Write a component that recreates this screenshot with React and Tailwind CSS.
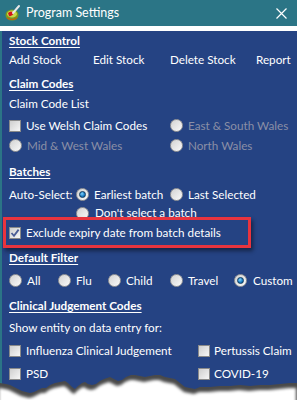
import React from "react";

const font = { fontFamily: 'Lato, "Noto Sans", sans-serif' };

function Radio({ checked }) {
  return (
    <span className="relative inline-flex h-[13px] w-[13px] shrink-0 items-center justify-center rounded-full border border-[#9a9a9a] bg-gradient-to-br from-[#d2d2d2] to-[#fafafa]">
      {checked && (
        <span className="h-[7px] w-[7px] rounded-full border border-[#0e3a5e] bg-[radial-gradient(circle_at_40%_35%,#7fd3ff,#1878c0_60%,#0b4f86)]" />
      )}
    </span>
  );
}

function Check({ checked }) {
  return (
    <span className="relative inline-flex h-[12px] w-[12px] shrink-0 items-center justify-center border border-[#8a8a8a] bg-gradient-to-br from-[#cfcfcf] to-[#f7f7f7]">
      {checked && (
        <svg width="10" height="10" viewBox="0 0 10 10">
          <path d="M1.5 5 L4 7.8 L8.6 1.6" fill="none" stroke="#4a5c96" strokeWidth="1.8" />
        </svg>
      )}
    </span>
  );
}

function Heading({ children, className = "" }) {
  return (
    <div className={"flex h-[20px] items-center font-bold underline underline-offset-2 " + className}>
      {children}
    </div>
  );
}

const EDGE =
  "M0 378 L6 379 L10 380 L14 382 L18 384 L22 386 L26 387 L30 388 L34 387 L38 385 L42 383 L46 383 L50 380 L55 378 L60 377 L65 376 L68 378 L72 382 L75 384 L78 381 L82 378 L85 377 L88 379 L92 380 L96 379 L100 376 L104 374 L110 372 L114 374 L118 376 L122 375 L126 372 L131 370 L135 370 L140 371 L145 372 L150 371 L155 370 L160 370 L165 372 L170 373 L175 374 L180 378 L185 382 L190 383 L195 384 L200 382 L210 382 L220 381 L230 381 L240 380 L250 381 L260 380 L270 380 L280 379 L290 378 L297 378 L297 400 L0 400 Z";

export default function App() {
  return (
    <div className="w-[297px] h-[400px] overflow-hidden bg-white text-[11.7px] text-white whitespace-nowrap" style={font}>
      {/* title bar */}
      <div className="flex h-[26px] items-center bg-[#2b7586] pl-[4px] pr-[10px]">
        <svg width="18" height="18" viewBox="0 0 18 18" className="shrink-0">
          <ellipse cx="8" cy="11" rx="6.5" ry="5.5" fill="#7a9a1e" />
          <ellipse cx="8" cy="10" rx="5" ry="3.5" fill="#c8d84a" />
          <path d="M4 9 Q7 6 10 9 Q8 13 5 12 Z" fill="#d4141c" />
          <path d="M9 9 L15 2" stroke="#e8e8e8" strokeWidth="2" strokeLinecap="round" />
          <path d="M3 14 Q8 17 13 14" stroke="#c06010" strokeWidth="1.2" fill="none" />
        </svg>
        <span className="ml-[4px] text-[12.5px]">Program Settings</span>
        <svg width="11" height="11" viewBox="0 0 11 11" className="ml-auto">
          <path d="M0.5 0.5 L10.5 10.5 M10.5 0.5 L0.5 10.5" stroke="#fff" strokeWidth="1.2" />
        </svg>
      </div>
      {/* body */}
      <div className="relative h-[374px] border-l-2 border-[#2b7586] bg-[#254383] pl-[7px]">
        <Heading className="mt-[5px]">Stock Control</Heading>
        <div className="flex h-[18px] items-center">
          <span className="w-[84px]">Add Stock</span>
          <span className="w-[77px]">Edit Stock</span>
          <span className="w-[86px]">Delete Stock</span>
          <span>Report</span>
        </div>
        <Heading className="mt-[5px]">Claim Codes</Heading>
        <div className="mt-[1px] flex h-[18px] items-center">Claim Code List</div>
        <div className="mt-[3px] flex h-[20px] items-center">
          <div className="flex w-[161px] items-center gap-[5px]">
            <Check />
            <span>Use Welsh Claim Codes</span>
          </div>
          <div className="flex items-center gap-[5px] text-[#8a8fa6]">
            <Radio />
            <span>East &amp; South Wales</span>
          </div>
        </div>
        <div className="flex h-[20px] items-center">
          <div className="flex w-[161px] items-center gap-[5px] text-[#8a8fa6]">
            <Radio />
            <span>Mid &amp; West Wales</span>
          </div>
          <div className="flex items-center gap-[5px] text-[#8a8fa6]">
            <Radio />
            <span>North Wales</span>
          </div>
        </div>
        <Heading className="mt-[6px]">Batches</Heading>
        <div className="mt-[3px] flex h-[20px] items-center">
          <span className="w-[67px]">Auto-Select:</span>
          <div className="flex w-[94px] items-center gap-[5px]">
            <Radio checked />
            <span>Earliest batch</span>
          </div>
          <div className="flex items-center gap-[5px]">
            <Radio />
            <span>Last Selected</span>
          </div>
        </div>
        <div className="flex h-[16px] items-center pl-[67px]">
          <div className="flex items-center gap-[6px]">
            <Radio />
            <span>Don't select a batch</span>
          </div>
        </div>
        <div className="relative mt-[2px] flex h-[20px] items-center gap-[5px]">
          <span className="pointer-events-none absolute left-[-6px] top-[-6px] h-[31px] w-[248px] border-[3px] border-[#e8343e] shadow-[2px_3px_4px_rgba(0,0,0,0.45)]" />
          <Check checked />
          <span>Exclude expiry date from batch details</span>
        </div>
        <Heading className="mt-[5px]">Default Filter</Heading>
        <div className="mt-[3px] flex h-[20px] items-center">
          <div className="flex w-[49px] items-center gap-[5px]"><Radio /><span>All</span></div>
          <div className="flex w-[50px] items-center gap-[5px]"><Radio /><span>Flu</span></div>
          <div className="flex w-[62px] items-center gap-[5px]"><Radio /><span>Child</span></div>
          <div className="flex w-[64px] items-center gap-[5px]"><Radio /><span>Travel</span></div>
          <div className="flex items-center gap-[6px]"><Radio checked /><span>Custom</span></div>
        </div>
        <Heading className="mt-[5px]">Clinical Judgement Codes</Heading>
        <div className="mt-[3px] flex h-[18px] items-center">Show entity on data entry for:</div>
        <div className="mt-[4px] flex h-[20px] items-center">
          <div className="flex w-[189px] items-center gap-[5px]"><Check /><span>Influenza Clinical Judgement</span></div>
          <div className="flex items-center gap-[4px]"><Check /><span>Pertussis Claim</span></div>
        </div>
        <div className="mt-[3px] flex h-[20px] items-center">
          <div className="flex w-[189px] items-center gap-[5px]"><Check /><span>PSD</span></div>
          <div className="flex items-center gap-[4px]"><Check /><span>COVID-19</span></div>
        </div>
        {/* torn paper edge */}
        <svg className="absolute bottom-0 left-[-2px]" width="297" height="34" viewBox="0 366 297 34">
          <defs>
            <filter id="sh2" x="-5%" y="-50%" width="110%" height="200%">
              <feGaussianBlur stdDeviation="1.5" />
            </filter>
          </defs>
          <path d={EDGE} fill="#4a4a4a" />
          <path d={EDGE} transform="translate(-1 5)" fill="#fff" filter="url(#sh2)" />
        </svg>
      </div>
    </div>
  );
}
